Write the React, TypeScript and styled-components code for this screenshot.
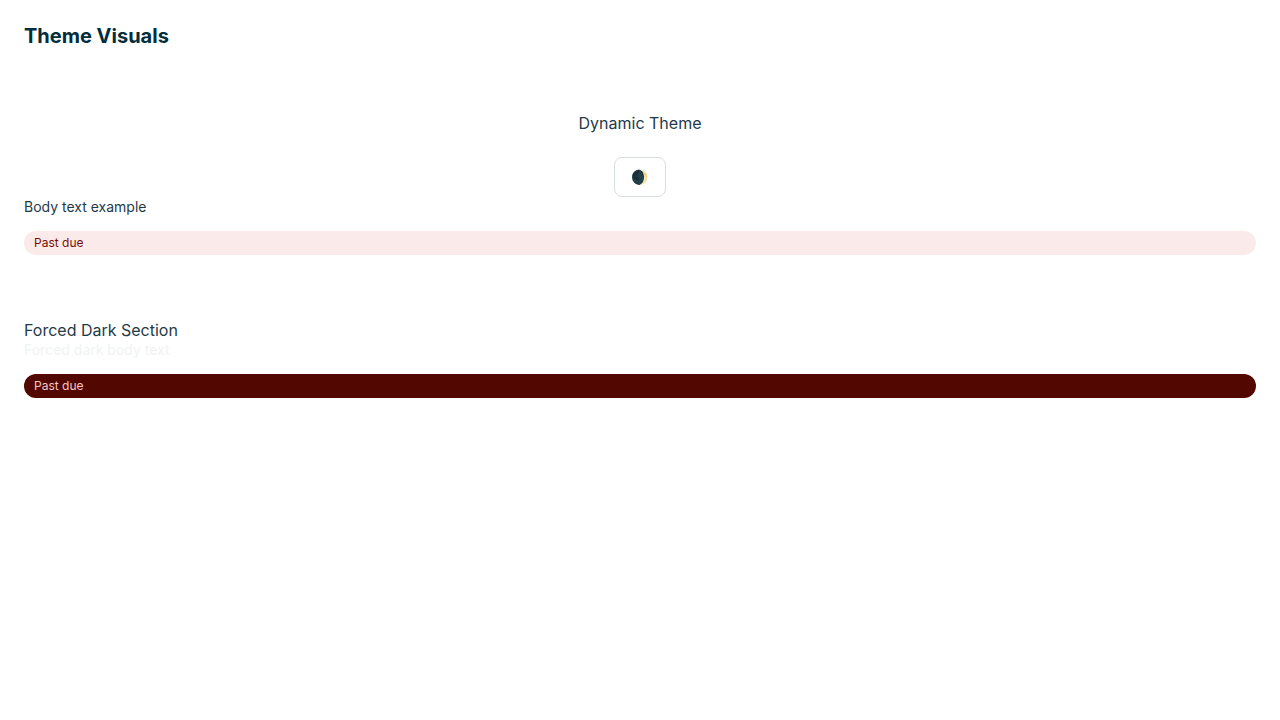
import React from "react";
import styled, { createGlobalStyle } from "styled-components";

const GlobalStyle = createGlobalStyle`
  *, *::before, *::after { box-sizing: border-box; }
  body {
    margin: 0;
    background: #ffffff;
    color: #1f3a48;
    font-family: Inter, "Liberation Sans", sans-serif;
    font-size: 16px;
  }
`;

const Page = styled.main`
  padding: 24px;
`;

const PageTitle = styled.h1`
  margin: 0;
  color: #032d3c;
  font-size: 20px;
  line-height: 24px;
  font-weight: 700;
`;

const Section = styled.section`
  display: flex;
  flex-direction: column;
  margin-top: 65px;
`;

const SectionTitle = styled.h2<{ $centered?: boolean }>`
  margin: 0;
  font-size: 16px;
  line-height: 20px;
  font-weight: 400;
  text-align: ${(p) => (p.$centered ? "center" : "left")};
`;

const ThemeButton = styled.button`
  align-self: center;
  width: 52px;
  height: 40px;
  margin-top: 24px;
  padding: 0 16px;
  border: 1px solid #d9dfe1;
  border-radius: 8px;
  background: #ffffff;
  color: #1f3a48;
  font-family: Inter, sans-serif;
  font-size: 14px;
  line-height: 20px;
  text-align: left;
  cursor: pointer;
`;

const BodyText = styled.p<{ $dark?: boolean }>`
  margin: 0;
  font-size: 14px;
  line-height: 20px;
  color: ${(p) => (p.$dark ? "#f0f3f3" : "#1f3a48")};
`;

const Badge = styled.div<{ $dark?: boolean }>`
  margin-top: 14px;
  padding: 4px 10px;
  border-radius: 12px;
  font-size: 12px;
  line-height: 16px;
  background: ${(p) => (p.$dark ? "#520700" : "#faebea")};
  color: ${(p) => (p.$dark ? "#f5c6c6" : "#7a0c05")};
`;

export default function App() {
  return (
    <>
      <GlobalStyle />
      <Page>
        <PageTitle>Theme Visuals</PageTitle>
        <Section>
          <SectionTitle $centered>Dynamic Theme</SectionTitle>
          <ThemeButton type="button" aria-label="Toggle theme">
            🌒
          </ThemeButton>
          <BodyText>Body text example</BodyText>
          <Badge>Past due</Badge>
        </Section>
        <Section>
          <SectionTitle>Forced Dark Section</SectionTitle>
          <BodyText $dark>Forced dark body text</BodyText>
          <Badge $dark>Past due</Badge>
        </Section>
      </Page>
    </>
  );
}
